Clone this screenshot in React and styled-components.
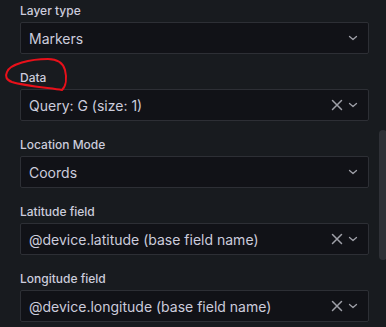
import React from 'react'
import styled, { createGlobalStyle } from 'styled-components'

const GlobalStyle = createGlobalStyle`
  html, body {
    margin: 0;
    padding: 0;
    background: #181b1f;
    overflow: hidden;
  }
  body {
    font-family: Inter, "Noto Sans", sans-serif;
  }
`

const fields = [
  { label: 'Layer type', value: 'Markers', clearable: false },
  { label: 'Data', value: 'Query: G (size: 1)', clearable: true, marked: true },
  { label: 'Location Mode', value: 'Coords', clearable: false },
  { label: 'Latitude field', value: '@device.latitude (base field name)', clearable: true },
  { label: 'Longitude field', value: '@device.longitude (base field name)', clearable: true }
]

export default function App () {
  return (
    <>
      <GlobalStyle />
      <Pane>
        <Form>
          {fields.map((f) => (
            <Field key={f.label}>
              <Label>
                {f.label}
                {f.marked && <Scribble />}
              </Label>
              <Select>
                <Value>{f.value}</Value>
                <Icons>
                  {f.clearable && <ClearIcon />}
                  <ChevronIcon />
                </Icons>
              </Select>
            </Field>
          ))}
        </Form>
        <ScrollThumb />
      </Pane>
    </>
  )
}

const ClearIcon = () => (
  <svg width='12' height='12' viewBox='0 0 12 12'>
    <path d='M1.5 1.5 L10.5 10.5 M10.5 1.5 L1.5 10.5' stroke='#9fa0a8' strokeWidth='1.5' strokeLinecap='round' />
  </svg>
)

const ChevronIcon = () => (
  <svg width='10' height='10' viewBox='0 0 10 10'>
    <path d='M1.5 3.5 L5 6.5 L8.5 3.5' fill='none' stroke='#9fa0a8' strokeWidth='1.3' strokeLinecap='round' strokeLinejoin='round' />
  </svg>
)

// hand drawn red ring around the "Data" label
const Scribble = () => (
  <ScribbleSvg width='70' height='40' viewBox='0 0 70 40'>
    <path
      d='M7 17 C10 9, 30 4, 48 4 C58 4, 63 8, 65 15 C67 23, 66 31, 62 35 C50 33, 25 31, 12 27 C6 25, 5 21, 7 17'
      fill='none'
      stroke='#e8101a'
      strokeWidth='2'
      strokeLinecap='round'
    />
  </ScribbleSvg>
)

const Pane = styled.div`
  position: relative;
  width: 386px;
  height: 327px;
  overflow: hidden;
`

const Form = styled.div`
  display: flex;
  flex-direction: column;
  gap: 16px;
  padding: 3px 17px 0 20px;
`

const Field = styled.div`
  display: flex;
  flex-direction: column;
  gap: 4px;
`

const Label = styled.label`
  position: relative;
  font-size: 12px;
  font-weight: 500;
  line-height: 15px;
  color: #ccccdc;
`

const ScribbleSvg = styled.svg`
  position: absolute;
  left: -20px;
  top: -15px;
  pointer-events: none;
`

const Select = styled.div`
  display: flex;
  align-items: center;
  height: 32px;
  box-sizing: border-box;
  background: #111217;
  border: 1px solid #2d2f35;
  border-radius: 2px;
  padding: 0 10px 0 8px;
`

const Value = styled.span`
  flex: 1;
  font-size: 14px;
  color: #ccccdc;
  white-space: nowrap;
  overflow: hidden;
`

const Icons = styled.div`
  display: flex;
  align-items: center;
  gap: 5px;
`

const ScrollThumb = styled.div`
  position: absolute;
  left: 379px;
  top: 130px;
  width: 8px;
  height: 130px;
  border-radius: 4px;
  background: #2f3137;
`
